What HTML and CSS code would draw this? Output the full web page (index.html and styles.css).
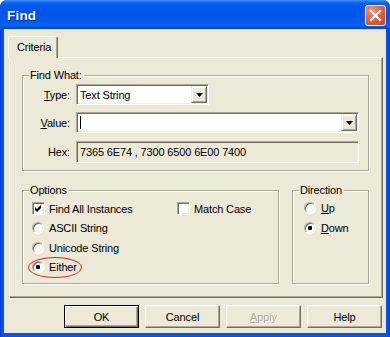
FILE: index.html
```html
<!DOCTYPE html>
<html>
<head>
<meta charset="utf-8">
<title>Find</title>
<link rel="stylesheet" href="styles.css">
</head>
<body>
<div class="window">
  <div class="titlebar">
    <span class="title">Find</span>
    <button class="close" aria-label="Close">
      <svg width="13" height="13" viewBox="0 0 13 13"><path d="M2 2 L11 11 M11 2 L2 11" stroke="#fff" stroke-width="2.2" stroke-linecap="square"/></svg>
    </button>
  </div>
  <div class="frame">
    <div class="client">
      <div class="tabs"><div class="tab">Criteria</div></div>
      <div class="panel">
        <div class="group findwhat">
          <span class="legend">Find What:</span>
          <div class="fields">
            <label class="flabel"><u>T</u>ype:</label>
            <div class="combo combo-type">
              <span class="combo-text">Text String</span>
              <span class="combo-btn"><svg width="7" height="4" viewBox="0 0 7 4"><path d="M0 0H7L3.5 4Z" fill="#000"/></svg></span>
            </div>
            <label class="flabel"><u>V</u>alue:</label>
            <div class="combo combo-value">
              <span class="combo-text"><span class="caret"></span></span>
              <span class="combo-btn"><svg width="7" height="4" viewBox="0 0 7 4"><path d="M0 0H7L3.5 4Z" fill="#000"/></svg></span>
            </div>
            <label class="flabel">Hex:</label>
            <div class="hexbox">7365 6E74 , 7300 6500 6E00 7400</div>
          </div>
        </div>
        <div class="lower">
          <div class="group options">
            <span class="legend">Options</span>
            <div class="optgrid">
              <div class="opt"><span class="chk"><svg width="7" height="7" viewBox="0 0 7 7"><path d="M0 2L2 4L6 0V3L2 7L0 5Z" fill="#000"/></svg></span>Find All Instances</div>
              <div class="opt"><span class="chk"></span>Match Case</div>
              <div class="opt"><span class="radio"></span>ASCII String</div>
              <div class="opt empty"></div>
              <div class="opt"><span class="radio"></span>Unicode String</div>
              <div class="opt empty"></div>
              <div class="opt marked"><span class="radio on"></span>Either<span class="ring"></span></div>
            </div>
          </div>
          <div class="group direction">
            <span class="legend">Direction</span>
            <div class="dirlist">
              <div class="opt"><span class="radio"></span><span><u>U</u>p</span></div>
              <div class="opt"><span class="radio on"></span><span><u>D</u>own</span></div>
            </div>
          </div>
        </div>
      </div>
      <div class="buttons">
        <button class="btn default">OK</button>
        <button class="btn">Cancel</button>
        <button class="btn disabled"><u>A</u>pply</button>
        <button class="btn">Help</button>
      </div>
    </div>
  </div>
</div>
</body>
</html>
```
FILE: styles.css
```css
* { box-sizing: border-box; }
html, body { margin: 0; padding: 0; background: #ffffff; }
body {
  width: 390px;
  height: 337px;
  overflow: hidden;
  font-family: "Liberation Sans", Arial, sans-serif;
  font-size: 11px;
  letter-spacing: -0.15px;
  color: #000;
}
.window {
  width: 390px;
  height: 337px;
  display: flex;
  flex-direction: column;
  border-radius: 7px 7px 0 0;
  overflow: hidden;
  background: #0055e5;
}
.titlebar {
  height: 29px;
  flex: none;
  display: flex;
  align-items: center;
  justify-content: space-between;
  padding: 1px 4px 0 7px;
  background: linear-gradient(to bottom, #4a95fa 0px, #2d7ff8 1px, #0b63ef 3px, #0058ee 6px, #0055ea 14px, #0058ee 21px, #0a63f6 25px, #0052e6 27px, #003dc4 29px);
}
.title {
  color: #fff;
  font-weight: bold;
  font-size: 13.5px;
  text-shadow: 1px 1px 0 #0a2a8f;
  letter-spacing: 0.2px;
}
.close {
  width: 21px;
  height: 21px;
  padding: 0;
  border: 1px solid #fff;
  border-radius: 3px;
  background: radial-gradient(circle at 30% 25%, #ee9a80 0%, #df6a48 40%, #c8401f 100%);
  display: flex;
  align-items: center;
  justify-content: center;
}
.close svg { display: block; }
.frame {
  flex: 1;
  display: flex;
  padding: 0 4px 4px 4px;
  background: linear-gradient(to right, #0831d9 0, #0055e8 2px, #0055e8 calc(100% - 2px), #0034c8 100%);
}
.client {
  flex: 1;
  background: #ece9d8;
  padding: 7px 3px 0 5px;
  display: flex;
  flex-direction: column;
}
.tabs {
  height: 21px;
  flex: none;
  display: flex;
  align-items: flex-start;
}
.tab {
  position: relative;
  z-index: 1;
  width: 50px;
  height: 22px;
  margin-left: -1px;
  padding: 0 0 0 8px;
  line-height: 20px;
  background: #ece9d8;
  border: 1px solid;
  border-bottom: none;
  border-color: #fff #716f64 transparent #fff;
  border-radius: 2px 2px 0 0;
  box-shadow: inset -1px 0 0 #aca899;
}
.panel {
  height: 241px;
  flex: none;
  border: 1px solid;
  border-color: #fff #716f64 #716f64 #fff;
  box-shadow: inset -1px -1px 0 #aca899;
  padding: 0 13px 0 12px;
}
.group {
  position: relative;
  border: 1px solid #aca899;
  box-shadow: 1px 1px 0 #fff, inset 1px 1px 0 #fff;
}
.legend {
  position: absolute;
  top: -7px;
  left: 6px;
  line-height: 13px;
  padding: 0 2px 0 1px;
  background: #ece9d8;
}
.findwhat {
  margin-top: 17px;
  height: 96px;
  padding: 8px 9px 0 0;
}
.fields {
  display: grid;
  grid-template-columns: 47px 1fr;
  grid-template-rows: 21px 21px 22px;
  column-gap: 6px;
  row-gap: 7px;
}
.fields > :nth-child(5), .fields > :nth-child(6) { margin-top: 1px; }
.flabel {
  text-align: right;
  align-self: center;
}
.combo {
  display: flex;
  height: 21px;
  border: 1px solid;
  border-color: #aca899 #fff #fff #aca899;
  box-shadow: inset 1px 1px 0 #716f64, inset -1px -1px 0 #f1efe2;
  padding: 1px;
  background: #fff;
}
.combo-type { width: 133px; }
.combo-text {
  flex: 1;
  display: flex;
  align-items: center;
  padding-left: 2px;
}
.caret {
  width: 1px;
  height: 13px;
  background: #000;
}
.combo-btn {
  width: 16px;
  height: 17px;
  border: 1px solid;
  border-color: #f1efe2 #716f64 #716f64 #f1efe2;
  box-shadow: inset 1px 1px 0 #fff, inset -1px -1px 0 #aca899;
  background: #ece9d8;
  display: flex;
  align-items: center;
  justify-content: center;
}
.combo-btn svg { display: block; }
.hexbox {
  height: 22px;
  display: flex;
  align-items: center;
  padding: 0 0 0 3px;
  border: 1px solid;
  border-color: #aca899 #fff #fff #aca899;
  box-shadow: inset 1px 1px 0 #716f64, inset -1px -1px 0 #f1efe2;
  background: #ece9d8;
}
.lower {
  margin-top: 19px;
  display: flex;
  gap: 13px;
  height: 94px;
}
.options {
  flex: 1;
  padding: 8px 0 0 9px;
}
.direction {
  width: 77px;
  flex: none;
  padding: 7px 0 0 11px;
}
.optgrid {
  display: grid;
  grid-template-columns: 145px auto;
  grid-auto-rows: 19.5px;
}
.dirlist {
  display: grid;
  grid-auto-rows: 20px;
}
.opt {
  display: flex;
  align-items: center;
  gap: 4px;
  white-space: nowrap;
}
.marked { position: relative; }
.ring {
  position: absolute;
  left: -4px;
  top: -1px;
  width: 54px;
  height: 21px;
  border: 1px solid #e02a2a;
  border-radius: 50%;
}
.chk {
  width: 13px;
  height: 13px;
  flex: none;
  border: 1px solid;
  border-color: #aca899 #fff #fff #aca899;
  box-shadow: inset 1px 1px 0 #716f64, inset -1px -1px 0 #f1efe2;
  background: #fff;
  display: flex;
  align-items: center;
  justify-content: center;
}
.chk svg { display: block; }
.radio {
  width: 12px;
  height: 12px;
  flex: none;
  margin-right: 1px;
  border-radius: 50%;
  border: 1px solid;
  border-color: #aca899 #fff #fff #aca899;
  box-shadow: inset 1px 1px 0 #716f64, inset -1px -1px 0 #f1efe2;
  background: #fff;
  display: flex;
  align-items: center;
  justify-content: center;
}
.radio.on::after {
  content: "";
  width: 4px;
  height: 4px;
  border-radius: 1px;
  background: #000;
}
.buttons {
  margin-top: 7px;
  margin-right: 1px;
  display: flex;
  justify-content: flex-end;
  gap: 6px;
}
.btn {
  width: 75px;
  height: 23px;
  padding: 0;
  font: inherit;
  letter-spacing: inherit;
  color: #000;
  background: #ece9d8;
  border: 1px solid;
  border-color: #fff #716f64 #716f64 #fff;
  box-shadow: inset -1px -1px 0 #aca899, inset 1px 1px 0 #f1efe2;
}
.btn.default {
  border-color: #000;
  box-shadow: inset 1px 1px 0 #fff, inset -1px -1px 0 #716f64, inset -2px -2px 0 #aca899;
}
.btn.disabled {
  color: #aca899;
  text-shadow: 1px 1px 0 #fff;
}
```
